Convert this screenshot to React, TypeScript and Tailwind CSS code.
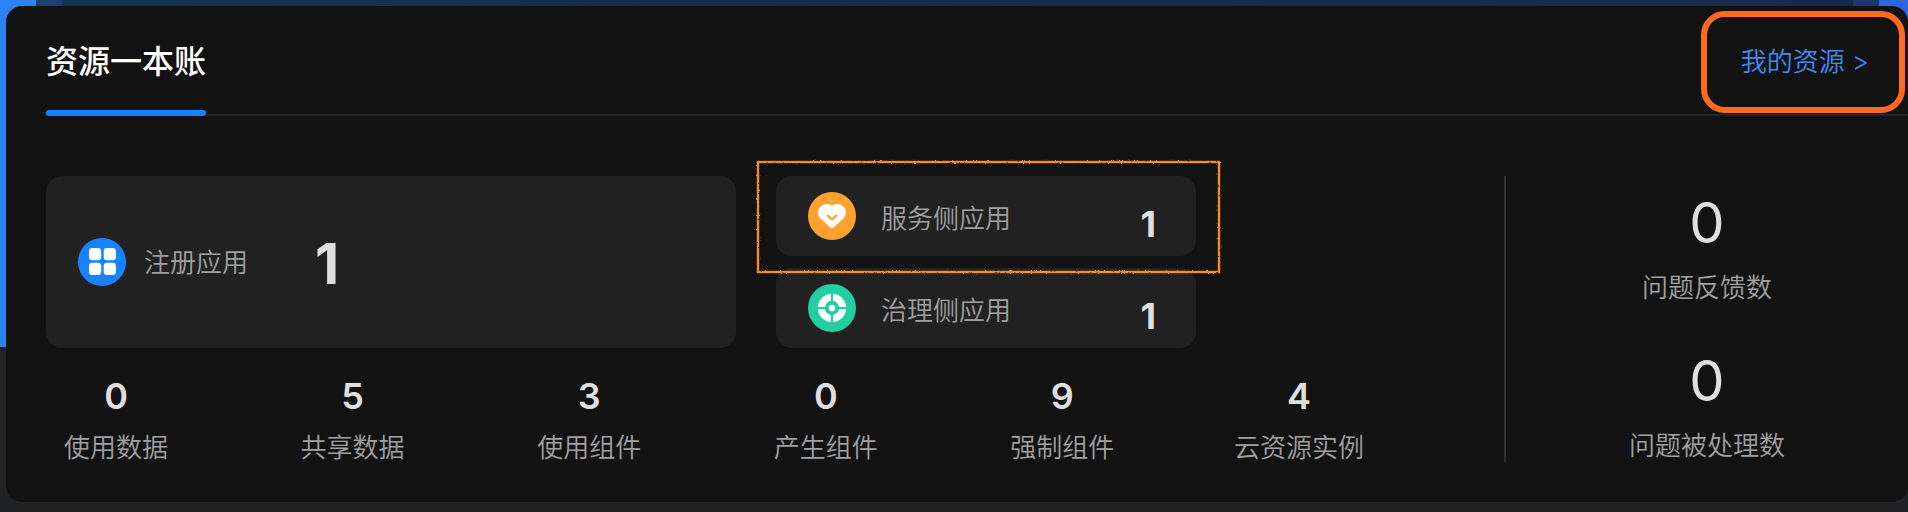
import React from "react";

type Stat = { label: string; value: number };

const usage: Stat[] = [
  { label: "使用数据", value: 0 },
  { label: "共享数据", value: 5 },
  { label: "使用组件", value: 3 },
  { label: "产生组件", value: 0 },
  { label: "强制组件", value: 9 },
  { label: "云资源实例", value: 4 },
];

const feedback: Stat[] = [
  { label: "问题反馈数", value: 0 },
  { label: "问题被处理数", value: 0 },
];

function AppsIcon() {
  return (
    <svg viewBox="0 0 48 48" className="size-12 shrink-0" aria-hidden="true">
      <circle cx="24" cy="24" r="24" fill="#1783ff" />
      <g fill="#fff">
        <rect x="11" y="10" width="12.2" height="12.2" rx="3.2" />
        <rect x="25.7" y="10" width="12.2" height="12.2" rx="3.2" />
        <rect x="11" y="24.7" width="12.2" height="12.2" rx="3.2" />
        <rect x="25.7" y="24.7" width="12.2" height="12.2" rx="3.2" />
      </g>
    </svg>
  );
}

function HeartIcon() {
  return (
    <svg viewBox="0 0 48 48" className="size-12 shrink-0" aria-hidden="true">
      <circle cx="24" cy="24" r="24" fill="#ffa22f" />
      <path
        d="M24 13.7C21 11.4 16 11.4 12.7 14.6C9.2 18 9.2 23 12.6 26.4L22 35.2Q24 36.9 26 35.2L35.4 26.4C38.8 23 38.8 18 35.3 14.6C32 11.4 27 11.4 24 13.7Z"
        fill="#fff"
      />
      <path
        d="M19.5 23.7L22.8 26.6Q24 27.5 25.2 26.6L28.5 23.7"
        fill="none"
        stroke="#ffa22f"
        strokeWidth="2.2"
        strokeLinecap="round"
      />
    </svg>
  );
}

function TargetIcon() {
  return (
    <svg viewBox="0 0 48 48" className="size-12 shrink-0" aria-hidden="true">
      <circle cx="24" cy="24" r="24" fill="#22cfa3" />
      <circle cx="24" cy="24" r="10.7" fill="none" stroke="#fff" strokeWidth="7" />
      <path d="M24 9V18M24 30V39M9 24H18M30 24H39" stroke="#22cfa3" strokeWidth="2.2" />
      <circle cx="24" cy="24" r="3.2" fill="#fff" />
    </svg>
  );
}

function SketchFrame() {
  return (
    <svg
      className="pointer-events-none absolute -top-3.5 -left-[18px] z-10 h-[calc(100%+30px)] w-[calc(100%+41px)] overflow-visible"
      aria-hidden="true"
    >
      <defs>
        <filter id="rough" x="-2%" y="-5%" width="104%" height="110%" colorInterpolationFilters="sRGB">
          <feTurbulence type="fractalNoise" baseFrequency="0.6" numOctaves="2" seed="4" result="noise" />
          <feDisplacementMap in="SourceGraphic" in2="noise" scale="2.4" xChannelSelector="R" yChannelSelector="G" />
        </filter>
      </defs>
      <rect width="100%" height="100%" fill="none" stroke="#f68c25" strokeWidth="2.4" filter="url(#rough)" />
    </svg>
  );
}

function SideCard({ icon, label, value, framed = false }: { icon: React.ReactNode; label: string; value: number; framed?: boolean }) {
  return (
    <div className="relative flex h-20 items-center rounded-2xl bg-[#212121] pr-10 pl-8">
      {icon}
      <span className="ml-[25px] pt-1.5 text-[26px] leading-8 text-[#a0a0a0]">{label}</span>
      <span className="ml-auto pt-4 text-4xl font-bold text-[#dfdfdf]">{value}</span>
      {framed && <SketchFrame />}
    </div>
  );
}

export default function App() {
  return (
    <div className="relative min-h-screen bg-[#202224] pt-1.5 pb-2.5 pl-1.5 font-['Inter','Noto_Sans_CJK_SC',sans-serif] font-[350]">
      <div className="absolute top-0 left-0 flex h-[347px] w-full bg-[#2a82f4]" aria-hidden="true">
        <div className="w-9" />
        <div className="w-[26px] bg-[#1d3f6e]" />
        <div className="flex-1 bg-linear-to-r from-[#18304f] to-[#1a294b]" />
        <div className="w-[26px] bg-[#20336b]" />
        <div className="w-[29px] bg-[#2f65de]" />
      </div>

      <section className="relative rounded-2xl bg-[#121212] pb-[34px] pl-10">
        <header className="flex h-[110px] items-end justify-between border-b-2 border-[#262626]">
          <h2 className="-mb-0.5 flex h-[110px] flex-col justify-between pt-8 text-[32px] leading-12 font-medium text-white">
            资源一本账
            <span className="h-1.5 rounded-full bg-[#1783ff]" />
          </h2>
          <div className="mr-[3px] mb-px flex h-[102px] items-center rounded-3xl border-6 border-[#ff6a20] pr-[30px] pl-[34px]">
            <a href="#resources" className="text-[26px] leading-8 text-[#3c8df8]">
              我的资源 &gt;
            </a>
          </div>
        </header>

        <div className="flex pt-15">
          <div className="flex-1 pr-[135px]">
            <div className="flex gap-10">
              <div className="flex w-[690px] items-center rounded-2xl bg-[#212121] pl-8">
                <AppsIcon />
                <span className="ml-[18px] pt-0.5 text-[26px] leading-8 text-[#a0a0a0]">注册应用</span>
                <span className="ml-[67px] pt-1 text-[56px] leading-none font-bold text-[#dfdfdf]">1</span>
              </div>
              <div className="flex w-[420px] flex-col gap-3">
                <SideCard icon={<HeartIcon />} label="服务侧应用" value={1} framed />
                <SideCard icon={<TargetIcon />} label="治理侧应用" value={1} />
              </div>
            </div>

            <dl className="flex justify-between pt-7">
              {usage.map((s) => (
                <div key={s.label} className="flex w-[140px] flex-col-reverse items-center gap-3">
                  <dt className="text-[26px] leading-10 text-[#a0a0a0]">{s.label}</dt>
                  <dd className="text-4xl leading-10 font-semibold text-[#dfdfdf]">{s.value}</dd>
                </div>
              ))}
            </dl>
          </div>

          <dl className="flex h-[286px] w-[404px] flex-col gap-[41px] border-l-2 border-[#303030] pt-[15px]">
            {feedback.map((s) => (
              <div key={s.label} className="flex flex-col-reverse items-center gap-[13px]">
                <dt className="text-[26px] leading-10 text-[#a0a0a0]">{s.label}</dt>
                <dd className="text-[56px] leading-16 font-normal text-[#dfdfdf]">{s.value}</dd>
              </div>
            ))}
          </dl>
        </div>
      </section>
    </div>
  );
}
